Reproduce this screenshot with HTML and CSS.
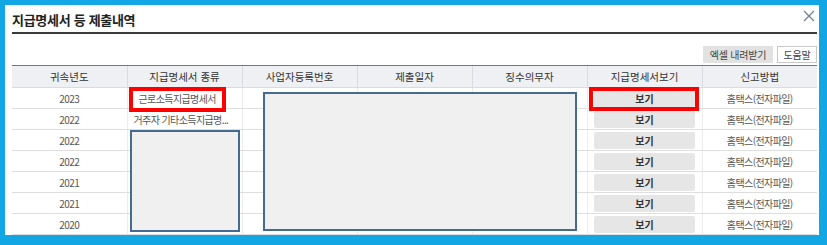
FILE: index.html
```html
<!DOCTYPE html>
<html lang="ko">
<head>
<meta charset="utf-8">
<link rel="stylesheet" href="styles.css">
</head>
<body>
<div class="frame">
  <div class="panel">
    <div class="titlebar">
      <h1 class="title">지급명세서 등 제출내역</h1>
      <svg class="close" width="12" height="12" viewBox="0 0 12 12"><path d="M1 1 L11 11 M11 1 L1 11" stroke="#6f7f90" stroke-width="1.2" fill="none"/></svg>
    </div>
    <div class="toolbar">
      <button class="btn btn-gray">엑셀 내려받기</button>
      <button class="btn btn-white">도움말</button>
    </div>
    <div class="tablewrap">
      <table class="grid">
        <thead>
          <tr>
            <th>귀속년도</th><th>지급명세서 종류</th><th>사업자등록번호</th><th>제출일자</th><th>징수의무자</th><th>지급명세서보기</th><th>신고방법</th>
          </tr>
        </thead>
        <tbody>
          <tr><td>2023</td><td class="first">근로소득지급명세서</td><td></td><td></td><td></td><td><span class="view">보기</span></td><td>홈택스(전자파일)</td></tr>
          <tr><td>2022</td><td class="left">거주자 기타소득지급명...</td><td></td><td></td><td></td><td><span class="view">보기</span></td><td>홈택스(전자파일)</td></tr>
          <tr><td>2022</td><td></td><td></td><td></td><td></td><td><span class="view">보기</span></td><td>홈택스(전자파일)</td></tr>
          <tr><td>2022</td><td></td><td></td><td></td><td></td><td><span class="view">보기</span></td><td>홈택스(전자파일)</td></tr>
          <tr><td>2021</td><td></td><td></td><td></td><td></td><td><span class="view">보기</span></td><td>홈택스(전자파일)</td></tr>
          <tr><td>2021</td><td></td><td></td><td></td><td></td><td><span class="view">보기</span></td><td>홈택스(전자파일)</td></tr>
          <tr><td>2020</td><td></td><td></td><td></td><td></td><td><span class="view">보기</span></td><td>홈택스(전자파일)</td></tr>
        </tbody>
      </table>
      <div class="mask mask-a"></div>
      <div class="mask mask-b"></div>
      <div class="mark mark-a"></div>
      <div class="mark mark-b"></div>
    </div>
  </div>
</div>
</body>
</html>
```
FILE: styles.css
```css
* { box-sizing: border-box; }
html, body { margin: 0; padding: 0; }
body {
  width: 827px;
  height: 245px;
  overflow: hidden;
  font-family: "Noto Sans CJK KR", "Noto Sans", sans-serif;
  color: #555;
}
.frame {
  width: 827px;
  height: 245px;
  background: #12a6e4;
  padding: 5px 8px 10px 5px;
}
.panel {
  background: #fff;
  height: 230px;
  padding: 0 2px 0 7px;
}
.titlebar {
  height: 29px;
  display: flex;
  align-items: center;
  justify-content: space-between;
  border-bottom: 2px solid #3a3a3a;
  padding-top: 1px;
}
.title {
  margin: 0;
  font-size: 13px;
  letter-spacing: -0.3px;
  font-weight: bold;
  color: #222;
}
.close { margin-right: 2px; margin-top: -6px; }
.toolbar {
  display: flex;
  justify-content: flex-end;
  gap: 4px;
  margin-top: 12px;
  height: 17px;
}
.btn {
  font-family: inherit;
  font-size: 10px;
  letter-spacing: -0.2px;
  color: #444;
  height: 17px;
  padding: 0;
  line-height: 15px;
  margin: 0;
  white-space: nowrap;
}
.btn-gray { background: #e2e2e2; border: 1px solid #e2e2e2; width: 70px; }
.btn-white { background: #fff; border: 1px solid #c8c8c8; width: 40px; }
.tablewrap {
  position: relative;
  margin-top: 2px;
}
.grid {
  width: 805px;
  table-layout: fixed;
  border-collapse: collapse;
  font-size: 10px;
}
.grid th {
  height: 22px;
  background: #eef0f4;
  border-top: 1px solid #777;
  border-bottom: 1px solid #d8dbe0;
  border-left: 1px solid #d8dbe0;
  font-weight: normal;
  font-size: 10.5px;
  color: #333;
  padding: 0;
}
.grid th:first-child, .grid td:first-child { border-left: none; }
.grid td {
  height: 21px;
  border-bottom: 1px solid #dedede;
  border-left: 1px solid #ececec;
  text-align: center;
  padding: 0;
  white-space: nowrap;
  overflow: hidden;
  letter-spacing: -0.6px;
}
.grid td.left { text-align: left; padding-left: 6px; }
.grid td.first { text-align: left; padding-left: 11px; }
.view {
  display: inline-block;
  width: 101px;
  height: 17px;
  line-height: 17px;
  background: #e6e6e6;
  border-radius: 2px;
  font-weight: bold;
  color: #333;
  letter-spacing: 0;
  vertical-align: middle;
}
.mask {
  position: absolute;
  background: #f0f0f0;
  border: 2px solid #476a91;
}
.mask-a { left: 118px; top: 65px; width: 110px; height: 102px; }
.mask-b { left: 251px; top: 27px; width: 314px; height: 139px; }
.mark {
  position: absolute;
  border: 4px solid #f00;
}
.mark-a { left: 117px; top: 22px; width: 97px; height: 25px; }
.mark-b { left: 577px; top: 22px; width: 110px; height: 24px; }
```
